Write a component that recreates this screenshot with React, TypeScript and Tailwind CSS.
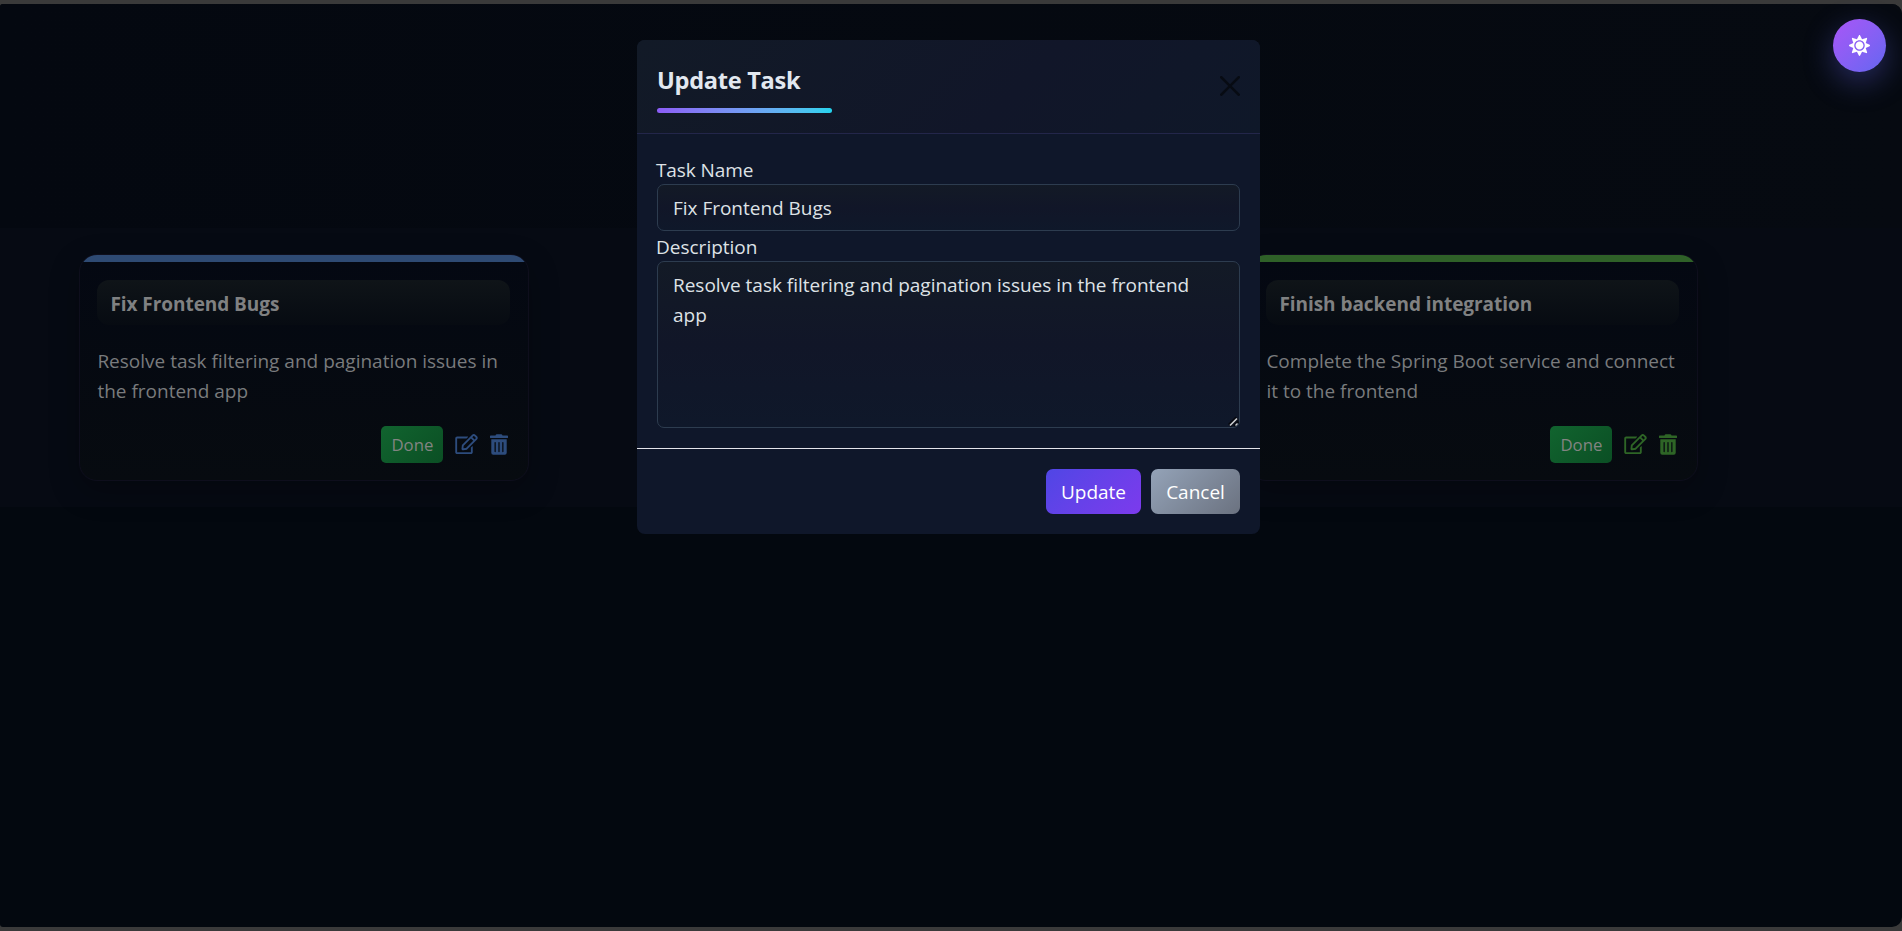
import { FaRegEdit, FaTrashAlt, FaSun } from "react-icons/fa";

type Task = { title: string; lines: [string, string]; bar: string; icon: string };

const tasks: (Task | null)[] = [
  {
    title: "Fix Frontend Bugs",
    lines: ["Resolve task filtering and pagination issues in", "the frontend app"],
    bar: "bg-[#2e4a73]",
    icon: "text-[#2d4c7d]",
  },
  null,
  {
    title: "Finish backend integration",
    lines: ["Complete the Spring Boot service and connect", "it to the frontend"],
    bar: "bg-[#2f6128]",
    icon: "text-[#2e6526]",
  },
];

function Card({ task }: { task: Task }) {
  return (
    <article className="h-[227px] overflow-hidden rounded-[18px] border border-[#0e0e1c] bg-linear-to-b from-[#040812] to-[#070b10] shadow-[0_10px_30px_rgba(0,0,0,0.25)]">
      <div className={`h-[7px] ${task.bar}`} />
      <div className="pt-[18px] pr-[18px] pl-[17px]">
        <h3 className="h-[45px] rounded-xl bg-linear-to-b from-[#0f1418] to-[#070b12] px-[13px] pt-[9px] leading-[30px] font-bold tracking-[-0.05px] text-[#808182]">
          {task.title}
        </h3>
        <p className="mt-[21px] leading-[30px] whitespace-nowrap text-[#797b7d]">
          {task.lines[0]}
          <br />
          {task.lines[1]}
        </p>
        <div className={`mt-[20px] flex items-center justify-end ${task.icon}`}>
          <button className="h-[37px] w-[62px] rounded-[5px] bg-linear-135 from-[#11642f] to-[#0b4f24] pt-px text-[16.8px] text-[#828482]">
            Done
          </button>
          <FaRegEdit className="mb-px ml-3 h-5 w-[23px]" />
          <FaTrashAlt className="mr-[2px] mb-px ml-3 h-[21px] w-[18px]" />
        </div>
      </div>
    </article>
  );
}

function UpdateDialog() {
  const field =
    "block w-full rounded-[7px] border border-[#2d3c4f] bg-linear-to-b from-[#131a26] via-[#111628] to-[#0f182a] px-[15px] text-[19px] tracking-[-0.02px] text-[#dee2e6] outline-none";
  return (
    <div
      role="dialog"
      className="absolute top-10 left-[637px] w-[623px] overflow-hidden rounded-lg bg-[#0f172a] text-[#dee2e6]"
    >
      <header className="flex h-[94px] items-start justify-between border-b border-[#23264a] bg-linear-135 from-[#121a27] via-[#111629] via-60% to-[#0f1829] px-5">
        <div className="w-[175px] pt-[21px]">
          <h2 className="text-[23.6px] leading-[38px] font-bold tracking-[-0.3px] whitespace-nowrap text-[#e2e8f0]">
            Update Task
          </h2>
          <div className="mt-[9px] h-[5px] rounded-full bg-linear-to-r from-[#8b5cf6] to-[#22d3ee]" />
        </div>
        <button aria-label="Close" className="mt-9 text-[#070b13]">
          <svg viewBox="0 0 16 16" className="size-5" fill="currentColor">
            <path d="M.293.293a1 1 0 0 1 1.414 0L8 6.586 14.293.293a1 1 0 1 1 1.414 1.414L9.414 8l6.293 6.293a1 1 0 0 1-1.414 1.414L8 9.414l-6.293 6.293a1 1 0 0 1-1.414-1.414L6.586 8 .293 1.707a1 1 0 0 1 0-1.414" />
          </svg>
        </button>
      </header>
      <div className="p-5">
        <label className="-ml-px block h-[30px] pt-px leading-[30px] tracking-[-0.1px]">Task Name</label>
        <input className={`h-[47px] ${field}`} defaultValue="Fix Frontend Bugs" />
        <label className="-ml-px block h-[30px] pt-px leading-[30px]">Description</label>
        <div className="relative">
          <textarea
            className={`h-[167px] resize-none py-2 leading-[30px] ${field}`}
            defaultValue="Resolve task filtering and pagination issues in the frontend app"
          />
          <svg viewBox="0 0 11 11" className="absolute right-px bottom-px size-[11px]" fill="none">
            <path d="M1.5 9.5 L9 2" stroke="#05070d" strokeWidth="4" />
            <path d="M6 10 L10.5 5.5" stroke="#05070d" strokeWidth="2" />
            <path d="M2 9.5 L9 2.5" stroke="#c9cbd0" strokeWidth="1.7" />
            <path d="M7.5 9.5 L9.5 7.5" stroke="#c9cbd0" strokeWidth="1.5" />
          </svg>
        </div>
      </div>
      <footer className="flex justify-end gap-[10px] border-t border-[#e4e4ea] p-5 text-white">
        <button className="h-[45px] w-[95px] rounded-[7px] bg-linear-135 from-[#4f46e5] to-[#7c3aed] pt-[2px]">
          Update
        </button>
        <button className="h-[45px] w-[89px] rounded-[7px] bg-linear-135 from-[#94a3b8] to-[#6b7280] pt-[2px]">
          Cancel
        </button>
      </footer>
    </div>
  );
}

export default function App() {
  return (
    <div className="relative h-[931px] overflow-hidden bg-[#3a3a3a] pt-1 font-['Open_Sans',sans-serif] text-[19px]">
      <main className="h-[923px] overflow-hidden rounded-l-[3px] rounded-r-[10px] bg-[#03080f]">
        <div className="h-[224px] bg-linear-to-r from-[#040810] to-[#060a11]" />
        <section className="grid h-[279px] grid-cols-[450px_450px_450px] gap-x-[134.5px] bg-[#060a13] pt-[26px] pl-[79.4px]">
          {tasks.map((t, i) => (t ? <Card key={i} task={t} /> : <div key={i} />))}
        </section>
      </main>
      <UpdateDialog />
      <button
        aria-label="Toggle theme"
        className="absolute top-[19px] right-4 flex size-[53px] items-center justify-center rounded-full bg-linear-135 from-[#a855f7] to-[#6366f1] text-white shadow-[0_10px_30px_rgba(99,102,241,0.35)]"
      >
        <FaSun className="size-[21px]" />
      </button>
    </div>
  );
}
